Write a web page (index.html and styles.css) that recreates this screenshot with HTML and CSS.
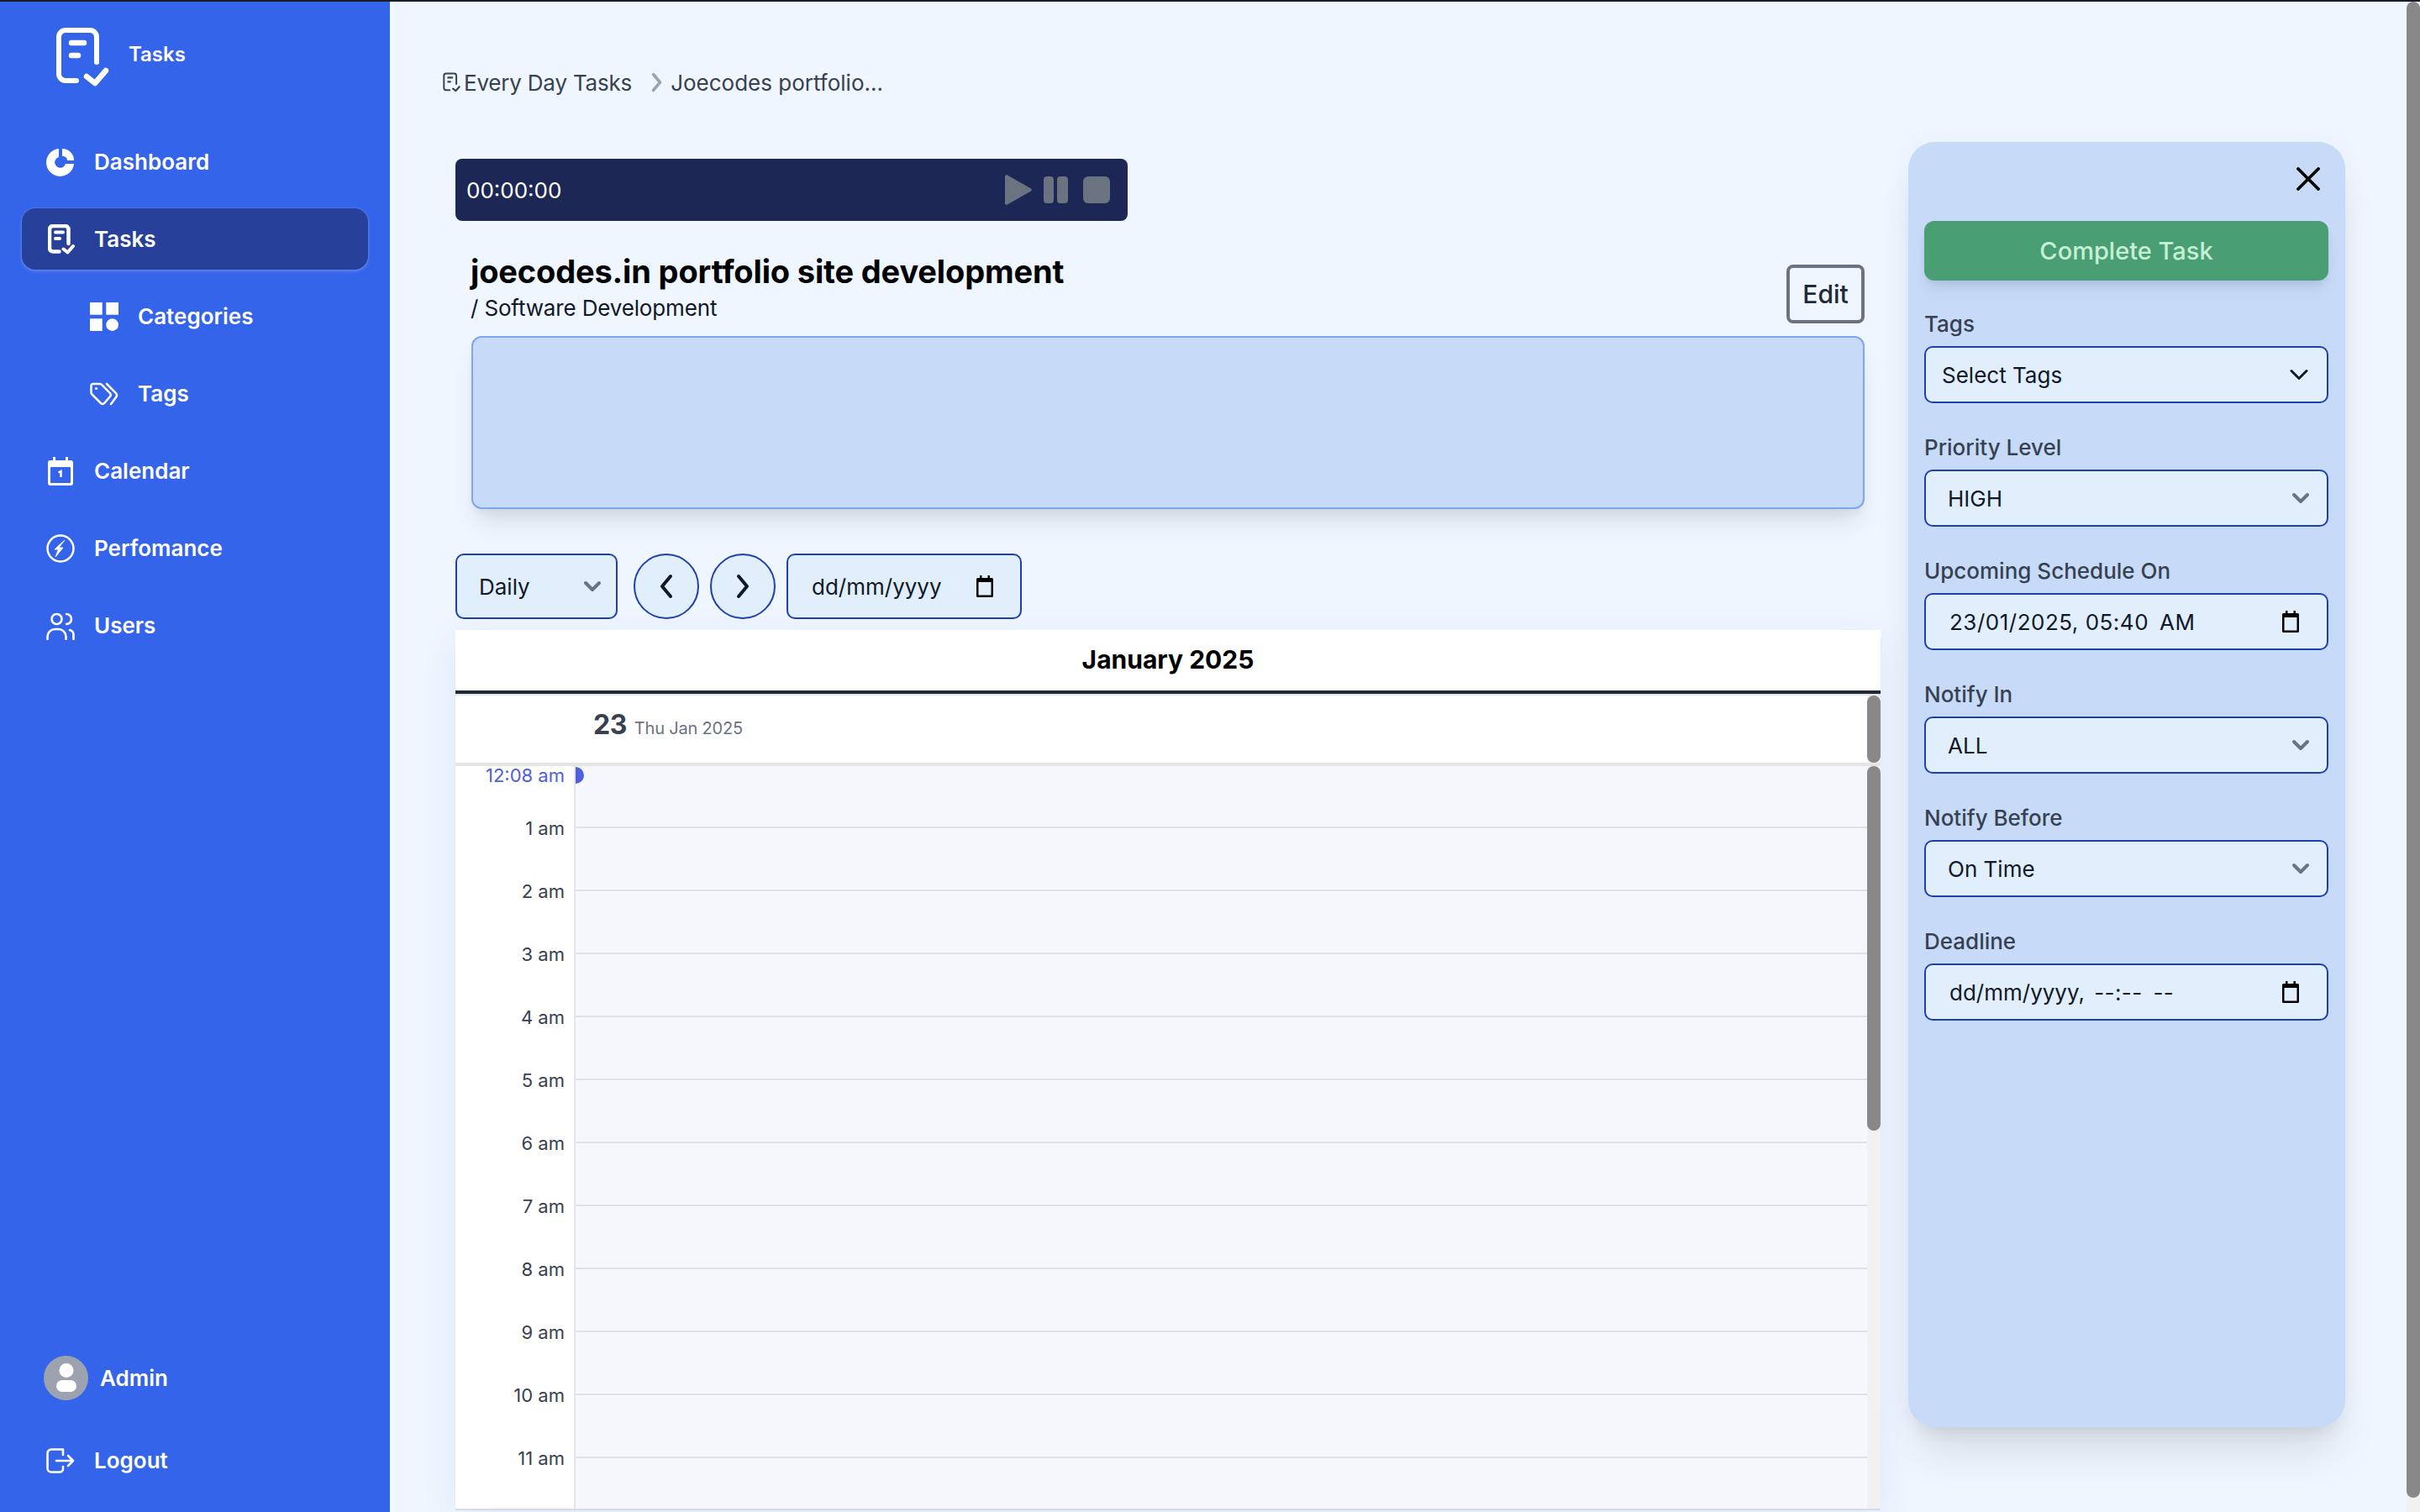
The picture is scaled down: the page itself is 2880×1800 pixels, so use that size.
FILE: index.html
```html
<!DOCTYPE html>
<html lang="en">
<head>
<meta charset="utf-8">
<title>Tasks</title>
<link rel="stylesheet" href="styles.css">
</head>
<body>
<svg class="defs" width="0" height="0" aria-hidden="true">
  <symbol id="task" viewBox="0 0 64 72">
    <path d="M25 64H12a8 8 0 0 1-8-8V12a8 8 0 0 1 8-8h29a8 8 0 0 1 8 8v30" fill="none" stroke="currentColor" stroke-width="6" stroke-linecap="round"/>
    <path d="M19 19h15M19 34h8" fill="none" stroke="currentColor" stroke-width="6.500" stroke-linecap="round"/>
    <path d="M37 59l10 8 13-15" fill="none" stroke="currentColor" stroke-width="6.500" stroke-linecap="round" stroke-linejoin="round"/>
  </symbol>
  <symbol id="task-bold" viewBox="0 0 64 72">
    <path d="M27 65H12a8 8 0 0 1-8-8V12a8 8 0 0 1 8-8h29a8 8 0 0 1 8 8v34" fill="none" stroke="currentColor" stroke-width="9" stroke-linecap="round"/>
    <path d="M18 19h18M18 34h10" fill="none" stroke="currentColor" stroke-width="8" stroke-linecap="round"/>
    <path d="M37 59l10 8 13-15" fill="none" stroke="currentColor" stroke-width="8" stroke-linecap="round" stroke-linejoin="round"/>
  </symbol>
  <symbol id="cal" viewBox="0 0 20 26">
    <path d="M4 0h2.500v3H13.500V0H16v3h2.500A1.500 1.500 0 0 1 20 4.500v20a1.500 1.500 0 0 1-1.500 1.500h-17A1.500 1.500 0 0 1 0 24.500v-20A1.500 1.500 0 0 1 1.500 3H4z" fill="#000"/>
    <rect x="2.500" y="8" width="15" height="15.500" fill="#e1eefc"/>
  </symbol>
  <symbol id="chev-gray" viewBox="0 0 22 14">
    <path d="M3 3l8 8 8-8" fill="none" stroke="#6b7280" stroke-width="4" stroke-linecap="round" stroke-linejoin="round"/>
  </symbol>
</svg>
<div class="topline"></div>
<div class="app">
  <aside class="sidebar">
    <div class="brand">
      <svg class="brand-icon"><use href="#task"/></svg>
      <span class="brand-name">Tasks</span>
    </div>
    <nav class="nav">
      <a class="nav-item"><svg class="nav-icon" viewBox="0 0 34 34"><path d="M15 1A16.500 16.500 0 1 0 33 19H23A6.500 6.500 0 1 1 15 11z" fill="#fff"/><path d="M19 1a14 14 0 0 1 14 14H25a5 5 0 0 0-6-5z" fill="#fff"/></svg><span>Dashboard</span></a>
      <a class="nav-item active"><svg class="nav-icon task-small"><use href="#task-bold"/></svg><span>Tasks</span></a>
      <a class="nav-item sub"><svg class="nav-icon" viewBox="0 0 30 30"><rect width="13" height="13" fill="#fff"/><rect x="17" width="13" height="13" fill="#fff"/><rect y="17" width="13" height="13" fill="#fff"/><circle cx="23.500" cy="23.500" r="6.500" fill="#fff"/></svg><span>Categories</span></a>
      <a class="nav-item sub"><svg class="nav-icon" viewBox="0 0 34 28"><path d="M4 2h8a3 3 0 0 1 2 1l10 10a3 3 0 0 1 0 4l-7 8a3 3 0 0 1-4 0L2.500 14.500A3 3 0 0 1 1.500 12V4.500A2.500 2.500 0 0 1 4 2z" fill="none" stroke="#fff" stroke-width="2.500"/><path d="M20 2l11 11a4 4 0 0 1 0 5l-6 8" fill="none" stroke="#fff" stroke-width="2.500" stroke-linecap="round"/><circle cx="7.500" cy="7.500" r="1.600" fill="#fff"/></svg><span>Tags</span></a>
      <a class="nav-item"><svg class="nav-icon" viewBox="0 0 30 34"><path d="M6 0h3v4h12V0h3v4h3a3 3 0 0 1 3 3v24a3 3 0 0 1-3 3H3a3 3 0 0 1-3-3V7a3 3 0 0 1 3-3h3z" fill="#fff"/><rect x="3" y="12" width="24" height="19" rx="1" fill="#3364ea"/><path d="M12.500 18.500l3-1.500v7" fill="none" stroke="#fff" stroke-width="2.500"/></svg><span>Calendar</span></a>
      <a class="nav-item"><svg class="nav-icon" viewBox="0 0 34 34"><circle cx="17" cy="17" r="15.500" fill="none" stroke="#fff" stroke-width="2.500"/><path d="M22 7l-7 9h5l-9 11 3.500-9H10z" fill="#fff" stroke="#fff" stroke-width="1" stroke-linejoin="round"/></svg><span>Perfomance</span></a>
      <a class="nav-item"><svg class="nav-icon" viewBox="0 0 34 34"><circle cx="12.500" cy="9" r="6" fill="none" stroke="#fff" stroke-width="2.600"/><path d="M24 3a6 6 0 0 1 0 12M1.500 33v-3a9 9 0 0 1 9-9h4a9 9 0 0 1 9 9v3M28 22a6 6 0 0 1 4.500 6v5" fill="none" stroke="#fff" stroke-width="2.600" stroke-linecap="round"/></svg><span>Users</span></a>
    </nav>
    <div class="side-foot">
      <div class="admin"><svg class="avatar" viewBox="0 0 53 53"><circle cx="26.500" cy="26.500" r="26.500" fill="#9ca3af"/><circle cx="27" cy="17.500" r="8.500" fill="#fff"/><rect x="15" y="29" width="24" height="14" rx="7" fill="#fff"/></svg><span>Admin</span></div>
      <a class="nav-item logout"><svg class="nav-icon" viewBox="0 0 34 30"><path d="M20 1.500H6A4.500 4.500 0 0 0 1.500 6v18A4.500 4.500 0 0 0 6 28.500h10a4 4 0 0 0 4-4V22M20 8V1.500" fill="none" stroke="#fff" stroke-width="2.600" stroke-linecap="round"/><path d="M12 15h20M26 9l6 6-6 6" fill="none" stroke="#fff" stroke-width="2.600" stroke-linecap="round" stroke-linejoin="round"/></svg><span>Logout</span></a>
    </div>
  </aside>

  <main class="main">
    <div class="crumbs">
      <svg class="crumb-icon"><use href="#task"/></svg>
      <span class="crumb-first">Every Day Tasks</span>
      <svg class="crumb-sep" viewBox="0 0 13 24"><path d="M2.500 2.500l8 9.500-8 9.500" fill="none" stroke="#9ca3af" stroke-width="3.500" stroke-linecap="round" stroke-linejoin="round"/></svg>
      <span>Joecodes portfolio...</span>
    </div>
    <div class="content">
      <section class="left">
        <div class="timer">
          <span class="timer-time">00:00:00</span>
          <div class="timer-btns">
            <svg class="i-play" viewBox="0 0 32 36"><path d="M2 0l29 16.500a2 2 0 0 1 0 3L2 36a2 2 0 0 1-2-2V2a2 2 0 0 1 2-2z" fill="#6b7280"/></svg>
            <svg class="i-pause" viewBox="0 0 29 32"><rect width="12" height="32" rx="4" fill="#6b7280"/><rect x="16" width="13" height="32" rx="4" fill="#6b7280"/></svg>
            <span class="i-stop"></span>
          </div>
        </div>
        <div class="head">
          <div class="head-text">
            <h1>joecodes.in portfolio site development</h1>
            <p>/ Software Development</p>
          </div>
          <button class="edit">Edit</button>
        </div>
        <div class="desc"></div>
        <div class="controls">
          <div class="ctl ctl-select"><span>Daily</span><svg class="chev"><use href="#chev-gray"/></svg></div>
          <button class="round"><svg viewBox="0 0 20 30"><path d="M15 3L5 15l10 12" fill="none" stroke="#111827" stroke-width="4" stroke-linecap="round" stroke-linejoin="round"/></svg></button>
          <button class="round"><svg viewBox="0 0 20 30"><path d="M5 3l10 12L5 27" fill="none" stroke="#111827" stroke-width="4" stroke-linecap="round" stroke-linejoin="round"/></svg></button>
          <div class="ctl ctl-date"><span>dd/mm/yyyy</span><svg class="cal-ico"><use href="#cal"/></svg></div>
        </div>
        <div class="calendar">
          <div class="cal-title">January 2025</div>
          <div class="cal-day">
            <div class="day-label"><b>23</b><span>Thu Jan 2025</span></div>
            <div class="head-track"><div class="thumb"></div></div>
          </div>
          <div class="cal-body">
            <div class="hours">
              <div class="hour"><div class="gutter now"><span>12:08 am</span></div><div class="cell"><i class="now-dot"></i></div></div>
              <div class="hour"><div class="gutter"><span>1 am</span></div><div class="cell"></div></div>
              <div class="hour"><div class="gutter"><span>2 am</span></div><div class="cell"></div></div>
              <div class="hour"><div class="gutter"><span>3 am</span></div><div class="cell"></div></div>
              <div class="hour"><div class="gutter"><span>4 am</span></div><div class="cell"></div></div>
              <div class="hour"><div class="gutter"><span>5 am</span></div><div class="cell"></div></div>
              <div class="hour"><div class="gutter"><span>6 am</span></div><div class="cell"></div></div>
              <div class="hour"><div class="gutter"><span>7 am</span></div><div class="cell"></div></div>
              <div class="hour"><div class="gutter"><span>8 am</span></div><div class="cell"></div></div>
              <div class="hour"><div class="gutter"><span>9 am</span></div><div class="cell"></div></div>
              <div class="hour"><div class="gutter"><span>10 am</span></div><div class="cell"></div></div>
              <div class="hour"><div class="gutter"><span>11 am</span></div><div class="cell"></div></div>
            </div>
            <div class="body-track"><div class="thumb"></div></div>
          </div>
        </div>
      </section>

      <aside class="panel">
        <div class="panel-close"><svg viewBox="0 0 28 28"><path d="M2 2l24 24M26 2L2 26" fill="none" stroke="#000" stroke-width="3.800" stroke-linecap="round"/></svg></div>
        <button class="complete">Complete Task</button>
        <div class="field">
          <label>Tags</label>
          <div class="box box-tags"><span>Select Tags</span><svg class="chev-thin" viewBox="0 0 22 14"><path d="M2 2.500l9 9 9-9" fill="none" stroke="#111827" stroke-width="3" stroke-linecap="round" stroke-linejoin="round"/></svg></div>
        </div>
        <div class="field">
          <label>Priority Level</label>
          <div class="box"><span>HIGH</span><svg class="chev"><use href="#chev-gray"/></svg></div>
        </div>
        <div class="field">
          <label>Upcoming Schedule On</label>
          <div class="box box-date"><span class="sched">23/01/2025, 05:40&nbsp;&thinsp;AM</span><svg class="cal-ico"><use href="#cal"/></svg></div>
        </div>
        <div class="field">
          <label>Notify In</label>
          <div class="box"><span>ALL</span><svg class="chev"><use href="#chev-gray"/></svg></div>
        </div>
        <div class="field">
          <label>Notify Before</label>
          <div class="box"><span>On Time</span><svg class="chev"><use href="#chev-gray"/></svg></div>
        </div>
        <div class="field">
          <label>Deadline</label>
          <div class="box box-date"><span>dd/mm/yyyy, <span class="dash">--:--&nbsp;&thinsp;--</span></span><svg class="cal-ico"><use href="#cal"/></svg></div>
        </div>
      </aside>
    </div>
  </main>
  <div class="page-track"><div class="thumb"></div></div>
</div>
</body>
</html>
```
FILE: styles.css
```css
* { box-sizing: border-box; }
html, body { margin: 0; height: 100%; overflow: hidden; }
body { font-family: Inter, "Liberation Sans", sans-serif; background: #eff6ff; color: #111827; }
.defs { position: absolute; }
button { font-family: inherit; }

.topline { height: 2px; background: #1a1d24; }
.app { display: flex; height: 1798px; }

.sidebar { width: 464px; flex: none; background: #3364ea; color: #fff; display: flex; flex-direction: column; }
.brand { display: flex; align-items: center; height: 103px; padding: 29px 0 0 66px; }
.brand-icon { width: 64px; height: 72px; color: #fff; }
.brand-name { margin-left: 23px; margin-top: -7px; font-size: 24px; font-weight: 600; }
.nav { margin-top: 51px; display: flex; flex-direction: column; gap: 19px; padding: 0 26px; }
.nav-item { height: 73px; display: flex; align-items: center; font-size: 26px; font-weight: 600; color: #fff; padding-left: 29px; border-radius: 16px; }
.nav-icon { width: 34px; height: 34px; flex: none; margin-right: 23px; }
.nav-item.active { background: #27409a; box-shadow: 0 2px 4px rgba(255,255,255,.2), 0 0 2px rgba(255,255,255,.25); }
.nav-item .task-small { width: 32px; height: 36px; color: #fff; margin: 0 23px 0 2px; }
.nav-item.sub { padding-left: 81px; }
.side-foot { margin-top: auto; padding: 0 26px 25px; }
.admin { display: flex; align-items: center; height: 53px; margin-left: 26px; font-size: 26px; font-weight: 600; }
.avatar { width: 53px; height: 53px; margin-right: 14px; }
.logout { margin-top: 35px; }

.main { flex: 1; min-width: 0; position: relative; border-left: 4px solid #f4f8ff; }
.crumbs { display: flex; align-items: center; height: 34px; margin: 79px 0 0 59px; font-size: 26px; color: #374151; }
.crumb-first { letter-spacing: -0.2px; }
.crumb-icon { width: 21px; height: 24px; color: #374151; margin-right: 4px; }
.crumb-sep { width: 13px; height: 24px; margin: 0 10px 0 23px; }
.content { display: flex; margin: 54px 0 0 74px; gap: 33px; align-items: flex-start; }

.left { width: 1696px; flex: none; padding-top: 20px; }
.timer { width: 800px; height: 74px; background: #1c2755; border-radius: 8px; display: flex; align-items: center; justify-content: space-between; padding: 0 21px 0 13px; }
.timer-time { color: #fff; font-size: 26px; }
.timer-btns { display: flex; align-items: center; }
.i-play { width: 32px; height: 36px; margin-right: 14px; }
.i-pause { width: 29px; height: 32px; margin-right: 18px; }
.i-stop { width: 32px; height: 32px; background: #6b7280; border-radius: 6px; }

.head { display: flex; justify-content: space-between; align-items: flex-end; margin: 37px 19px 0 18px; height: 85px; }
.head-text h1 { margin: 0 0 3px; font-size: 38px; line-height: 46px; font-weight: 700; color: #000; letter-spacing: -0.15px; }
.head-text p { margin: 0; font-size: 26px; line-height: 36px; letter-spacing: -0.15px; color: #111827; }
.edit { width: 93px; height: 70px; background: transparent; border: 4px solid #6b7280; border-radius: 8px; font-size: 30px; font-weight: 500; color: #1f2937; padding: 0; }
.desc { height: 206px; margin: 15px 19px 0; background: #c7daf8; border: 2px solid #7ea6f0; border-radius: 12px; box-shadow: 0 20px 30px -6px rgba(0,0,0,.1), 0 8px 12px -4px rgba(0,0,0,.06); }

.controls { display: flex; gap: 13px; margin-top: 53px; height: 78px; }
.ctl { background: #e1eefc; border: 2px solid #1e40af; border-radius: 10px; display: flex; align-items: center; justify-content: space-between; font-size: 26px; color: #111827; }
.ctl-select { width: 193px; padding: 0 17px 0 26px; margin-right: 6px; }
.ctl-date { width: 280px; padding: 0 32px 0 28px; }
.round { width: 78px; height: 78px; border-radius: 50%; background: #e1eefc; border: 2px solid #1e40af; padding: 0; display: flex; align-items: center; justify-content: center; }
.round svg { width: 20px; height: 30px; }
.chev { width: 22px; height: 14px; }
.cal-ico { width: 20px; height: 26px; }

.calendar { margin-top: 13px; height: 1048px; background: #fff; overflow: hidden; box-shadow: 0 10px 40px rgba(30,64,175,.08); border-bottom: 2px solid #d5dce8; }
.cal-title { height: 76px; border-bottom: 4px solid #1f2937; display: flex; align-items: center; justify-content: center; font-size: 30px; font-weight: 700; color: #000; padding-bottom: 2px; }
.cal-day { display: flex; height: 86px; border-top: 2px solid #e5e5e5; border-bottom: 4px solid #e5e5e5; }
.day-label { flex: 1; padding: 15px 0 0 164px; display: flex; align-items: baseline; color: #374151; }
.day-label b { font-size: 32px; font-weight: 700; letter-spacing: -0.5px; }
.day-label span { margin-left: 9px; font-size: 20px; letter-spacing: -0.2px; color: #6b7280; }
.head-track { width: 16px; background: #f1f1f1; }
.thumb { background: #888; border-radius: 8px; }
.head-track .thumb { height: 80px; }
.cal-body { display: flex; }
.hours { flex: 1; min-width: 0; }
.hour { display: flex; height: 75px; }
.hour:first-child { height: 74px; }
.gutter { width: 143px; flex: none; display: flex; align-items: flex-start; justify-content: flex-end; padding-right: 11px; font-size: 22px; color: #374151; background: #fff; border-right: 2px solid #e5e5e5; }
.gutter span { line-height: 26px; margin-top: -13px; position: relative; z-index: 1; }
.gutter.now { color: #4f5fe0; }
.gutter.now span { margin-top: -2px; }
.cell { flex: 1; background: #f5f7fd; border-bottom: 2px solid #dfe2ea; position: relative; }
.now-dot { position: absolute; left: -10px; top: 1px; width: 20px; height: 20px; border-radius: 50%; background: #4f5fe0; clip-path: inset(0 0 0 10px); }
.body-track { width: 16px; flex: none; background: #f1f1f1; height: 890px; }
.body-track .thumb { height: 434px; }

.panel { width: 520px; flex: none; height: 1530px; background: #c7dbf9; border-radius: 32px; padding: 30px 20px 0 19px; box-shadow: 0 40px 50px -10px rgba(0,0,0,.1), 0 16px 20px -12px rgba(0,0,0,.08), 0 0 30px rgba(30,64,175,.04); }
.panel-close { display: flex; justify-content: flex-end; padding-right: 10px; }
.panel-close svg { width: 28px; height: 28px; }
.complete { display: block; width: 100%; height: 71px; margin: 36px 0 -1px; border: 0; border-radius: 12px; background: #4a9e74; color: #c6f0d5; font-size: 29px; font-weight: 500; box-shadow: 0 12px 18px -4px rgba(0,0,0,.1), 0 4px 8px -2px rgba(0,0,0,.06); }
.field { margin-top: 37px; }
.field label { display: block; height: 42px; line-height: 32px; font-size: 26px; font-weight: 500; color: #374151; }
.box { height: 68px; background: #e1eefc; border: 2px solid #1e40af; border-radius: 10px; display: flex; align-items: center; justify-content: space-between; font-size: 26px; color: #111827; padding: 0 20px 0 26px; }
.box-tags { padding: 0 22px 0 19px; }
.chev-thin { width: 22px; height: 14px; }
.box-date { padding: 0 33px 0 28px; }
.sched { letter-spacing: 0.5px; }
.dash { margin-left: 4px; letter-spacing: 0.4px; }
.page-track { width: 16px; flex: none; background: #f1f1f1; }
.page-track .thumb { height: 1781px; }
```
